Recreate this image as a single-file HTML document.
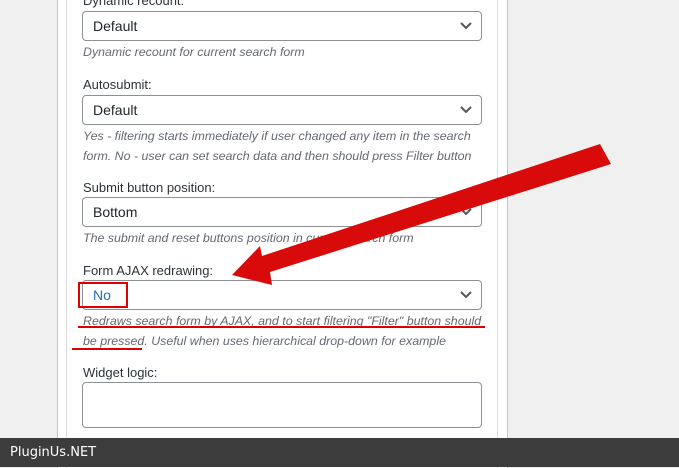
<!DOCTYPE html>
<html><head><style>
body{margin:0;width:679px;height:467px;background:#f0f0f1;position:relative;overflow:hidden;font-family:"Liberation Sans",sans-serif;font-size:13px;color:#1d2327}
.abs{position:absolute}
.sel{position:absolute;left:82px;width:398px;height:28px;border:1px solid #8c8f94;border-radius:4px;background:#fff}
.sel span{position:absolute;left:10px;top:6px;font-size:14px}
.sel svg{position:absolute;right:8px;top:9px}
.lbl{position:absolute;left:83px;font-size:13px;color:#2c3338}
.desc{position:absolute;left:83px;font-size:12.4px;font-style:italic;color:#646970;line-height:20px;width:400px}
</style></head><body>
<div class="abs" style="left:57px;top:-2px;width:449px;height:470px;background:#fff;border-left:1px solid #c3c4c7;border-right:1px solid #c3c4c7"></div>
<div class="abs" style="left:66px;top:-2px;width:430px;height:470px;border-left:1px solid #dcdcde;border-right:1px solid #dcdcde"></div>

<div class="lbl" style="top:-7px">Dynamic recount:</div>
<div class="sel" style="top:11px"><span>Default</span><svg width="14" height="10"><path d="M2 2l5 5 5-5" stroke="#50575e" stroke-width="2" fill="none"/></svg></div>
<div class="desc" style="top:42px">Dynamic recount for current search form</div>

<div class="lbl" style="top:77px">Autosubmit:</div>
<div class="sel" style="top:95px"><span>Default</span><svg width="14" height="10"><path d="M2 2l5 5 5-5" stroke="#50575e" stroke-width="2" fill="none"/></svg></div>
<div class="desc" style="top:126px">Yes - filtering starts immediately if user changed any item in the search form. No - user can set search data and then should press Filter button</div>

<div class="lbl" style="top:180px">Submit button position:</div>
<div class="sel" style="top:197px"><span>Bottom</span><svg width="14" height="10"><path d="M2 2l5 5 5-5" stroke="#50575e" stroke-width="2" fill="none"/></svg></div>
<div class="desc" style="top:228px">The submit and reset buttons position in current search form</div>

<div class="lbl" style="top:263px">Form AJAX redrawing:</div>
<div class="sel" style="top:280px"><span style="color:#2271b1">No</span><svg width="14" height="10"><path d="M2 2l5 5 5-5" stroke="#50575e" stroke-width="2" fill="none"/></svg></div>
<div class="abs" style="left:78px;top:282px;width:46px;height:22px;border:2px solid #d00"></div>
<div class="desc" style="top:311px">Redraws search form by AJAX, and to start filtering "Filter" button should be pressed. Useful when uses hierarchical drop-down for example</div>
<div class="abs" style="left:78px;top:326px;width:407px;height:2px;background:#d00"></div>
<div class="abs" style="left:72px;top:348px;width:70px;height:2px;background:#d00"></div>

<div class="lbl" style="top:365px">Widget logic:</div>
<div class="abs" style="left:82px;top:382px;width:398px;height:44px;border:1px solid #8c8f94;border-radius:4px;background:#fff"></div>

<svg class="abs" style="left:0;top:0" width="679" height="467"><polygon points="600,144 611,164 270,272 272,285 232,275 260,246 262,256" fill="#d80a0a"/></svg>

<div class="abs" style="left:0;top:438px;width:679px;height:29px;background:#3c3c3c;color:#fff;font-family:'DejaVu Sans',sans-serif;font-size:13px;line-height:29px;padding-left:10px;box-sizing:border-box">PluginUs.NET</div>
</body></html>
